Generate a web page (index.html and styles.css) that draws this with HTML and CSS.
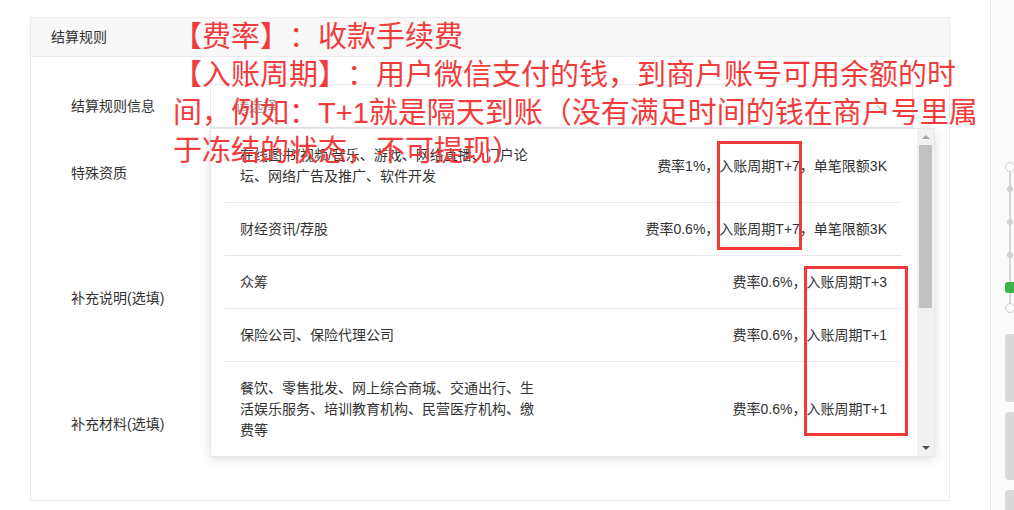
FILE: index.html
```html
<!DOCTYPE html>
<html lang="zh-CN">
<head>
<meta charset="utf-8">
<title>结算规则</title>
<link rel="stylesheet" href="styles.css">
</head>
<body>
<div class="page">
  <main class="main">
    <section class="card">
      <div class="card-head">结算规则</div>
      <div class="form">
        <div class="form-item item-1">
          <div class="label">结算规则信息</div>
          <div class="select">
            <span class="placeholder">请选择</span>
            <svg class="chevron" width="12" height="8" viewBox="0 0 12 8"><path d="M1 1.5 6 6.5 11 1.5" fill="none" stroke="#c0c4cc" stroke-width="1.3"/></svg>
            <div class="dropdown">
              <ul class="options">
                <li class="option">
                  <span class="opt-name">在线图书/视频/音乐、游戏、网络直播、门户论坛、网络广告及推广、软件开发</span>
                  <span class="opt-rule">费率1%，入账周期T+7，单笔限额3K</span>
                </li>
                <li class="option">
                  <span class="opt-name">财经资讯/荐股</span>
                  <span class="opt-rule">费率0.6%，入账周期T+7，单笔限额3K</span>
                </li>
                <li class="option">
                  <span class="opt-name">众筹</span>
                  <span class="opt-rule">费率0.6%，入账周期T+3</span>
                </li>
                <li class="option">
                  <span class="opt-name">保险公司、保险代理公司</span>
                  <span class="opt-rule">费率0.6%，入账周期T+1</span>
                </li>
                <li class="option">
                  <span class="opt-name">餐饮、零售批发、网上综合商城、交通出行、生活娱乐服务、培训教育机构、民营医疗机构、缴费等</span>
                  <span class="opt-rule">费率0.6%，入账周期T+1</span>
                </li>
              </ul>
              <div class="scrollbar">
                <div class="sb-btn"><span class="tri-up"></span></div>
                <div class="sb-thumb"></div>
                <div class="sb-space"></div>
                <div class="sb-btn"><span class="tri-down"></span></div>
              </div>
            </div>
          </div>
        </div>
        <div class="form-item item-2">
          <div class="label">特殊资质</div>
          <div class="field"></div>
        </div>
        <div class="form-item item-3">
          <div class="label">补充说明(选填)</div>
          <div class="field"></div>
        </div>
        <div class="form-item item-4">
          <div class="label">补充材料(选填)</div>
          <div class="field"></div>
        </div>
      </div>
    </section>
  </main>
  <aside class="sidebar">
    <div class="timeline">
      <span class="tl-ring"></span>
      <span class="tl-seg seg-a"></span>
      <span class="tl-dot"></span>
      <span class="tl-seg seg-b"></span>
      <span class="tl-dot"></span>
      <span class="tl-seg seg-b"></span>
      <span class="tl-dot"></span>
      <span class="tl-seg seg-c"></span>
      <span class="tl-active"></span>
      <span class="tl-seg seg-d"></span>
      <span class="tl-ring"></span>
    </div>
    <div class="blocks">
      <span class="block"></span>
      <span class="block"></span>
      <span class="block"></span>
    </div>
  </aside>

  <div class="note">【费率】：收款手续费<br>【入账周期】：用户微信支付的钱，到商户账号可用余额的时<br>间，例如：T+1就是隔天到账（没有满足时间的钱在商户号里属<br>于冻结的状态，不可提现）</div>
  <div class="mark mark-1"></div>
  <div class="mark mark-2"></div>
</div>
</body>
</html>
```

FILE: styles.css
```css
* { box-sizing: border-box; }
html, body { margin: 0; padding: 0; }
body {
  background: #fff;
  font-family: "Liberation Sans", "Noto Sans CJK SC", sans-serif;
  font-size: 14px;
  color: #333;
  overflow: hidden;
  text-spacing-trim: space-all;
}
.page {
  position: relative;
  display: flex;
  width: 1014px;
  height: 510px;
  overflow: hidden;
}
.main {
  width: 990px;
  padding: 17px 0 0 30px;
}
.card {
  width: 920px;
  height: 484px;
  border: 1px solid #ebebeb;
  background: #fff;
}
.card-head {
  height: 39px;
  line-height: 38px;
  padding-left: 20px;
  background: #f8f8f8;
  border-bottom: 1px solid #ebebeb;
  color: #333;
}
.form {
  display: flex;
  flex-direction: column;
  gap: 22px;
  padding: 27px 0 0 40px;
}
.form-item {
  display: flex;
  align-items: center;
}
.item-1 { height: 44px; }
.item-2 { height: 46px; }
.item-3 { height: 160px; }
.item-4 { height: 48px; }
.label {
  width: 139px;
  line-height: 21px;
  color: #333;
}
.select {
  position: relative;
  width: 703px;
  height: 44px;
  border: 1px solid #e4e7ed;
  display: flex;
  align-items: center;
  padding-left: 24px;
}
.placeholder { color: #999; line-height: 21px; }
.chevron { position: absolute; right: 24px; top: 19px; }
.field {
  width: 703px;
  height: 100%;
  border: 1px solid #e4e7ed;
}
.dropdown {
  position: absolute;
  left: -1px;
  top: 43px;
  width: 725px;
  height: 329px;
  background: #fff;
  border: 1px solid #e4e7ed;
  box-shadow: 0 3px 10px rgba(0, 0, 0, 0.12);
  display: flex;
  z-index: 2;
}
.options {
  list-style: none;
  margin: 0;
  padding: 0 15px 0 14px;
  flex: 1;
  overflow: hidden;
}
.option {
  display: flex;
  justify-content: space-between;
  align-items: center;
  padding: 16px 15px 15px;
  border-bottom: 1px solid #e8e8ec;
  line-height: 21px;
  color: #333;
}
.opt-name { width: 300px; }
.opt-rule { white-space: nowrap; }
.scrollbar {
  width: 17px;
  background: #f1f1f1;
  display: flex;
  flex-direction: column;
}
.sb-btn {
  height: 16px;
  display: flex;
  align-items: center;
  justify-content: center;
}
.tri-up {
  width: 0; height: 0;
  border-left: 4px solid transparent;
  border-right: 4px solid transparent;
  border-bottom: 4px solid #a3a3a3;
}
.tri-down {
  width: 0; height: 0;
  border-left: 4px solid transparent;
  border-right: 4px solid transparent;
  border-top: 4px solid #505050;
}
.sb-thumb {
  height: 163px;
  margin: 0 2px;
  background: #c1c1c1;
}
.sb-space { flex: 1; }

.sidebar {
  width: 24px;
  border-left: 1px solid #e6e6ec;
  background: #fbfbfb;
  padding: 162px 0 0 14px;
  display: flex;
  flex-direction: column;
}
.timeline {
  display: flex;
  flex-direction: column;
  align-items: flex-start;
}
.tl-ring {
  width: 10px; height: 10px;
  border: 1.5px solid #cfcfcf;
  border-radius: 50%;
  background: #fff;
}
.tl-seg {
  width: 2px;
  margin-left: 4px;
  background: #d6d6d6;
}
.seg-a { height: 14px; }
.seg-b { height: 27px; }
.seg-c { height: 24px; }
.seg-d { height: 10px; }
.tl-dot {
  width: 6px; height: 6px;
  margin-left: 2px;
  border-radius: 50%;
  background: #d0d0d0;
}
.tl-active {
  width: 20px; height: 11px;
  border-radius: 3px;
  background: #3cb44a;
}
.blocks {
  display: flex;
  flex-direction: column;
  gap: 10px;
  margin-top: 21px;
}
.block {
  flex: none;
  width: 20px; height: 68px;
  border-radius: 4px;
  background: #d9d9d9;
}

.note {
  position: absolute;
  left: 173px;
  top: 18px;
  font-family: "Liberation Sans", "Noto Sans CJK SC", sans-serif;
  font-size: 29px;
  line-height: 38px;
  color: #f23c3c;
  white-space: nowrap;
  text-spacing-trim: space-all;
  z-index: 5;
}
.mark {
  position: absolute;
  border: 3px solid #f03a3a;
  z-index: 6;
}
.mark-1 { left: 717px; top: 141px; width: 85px; height: 109px; }
.mark-2 { left: 804px; top: 266px; width: 104px; height: 170px; }
```
